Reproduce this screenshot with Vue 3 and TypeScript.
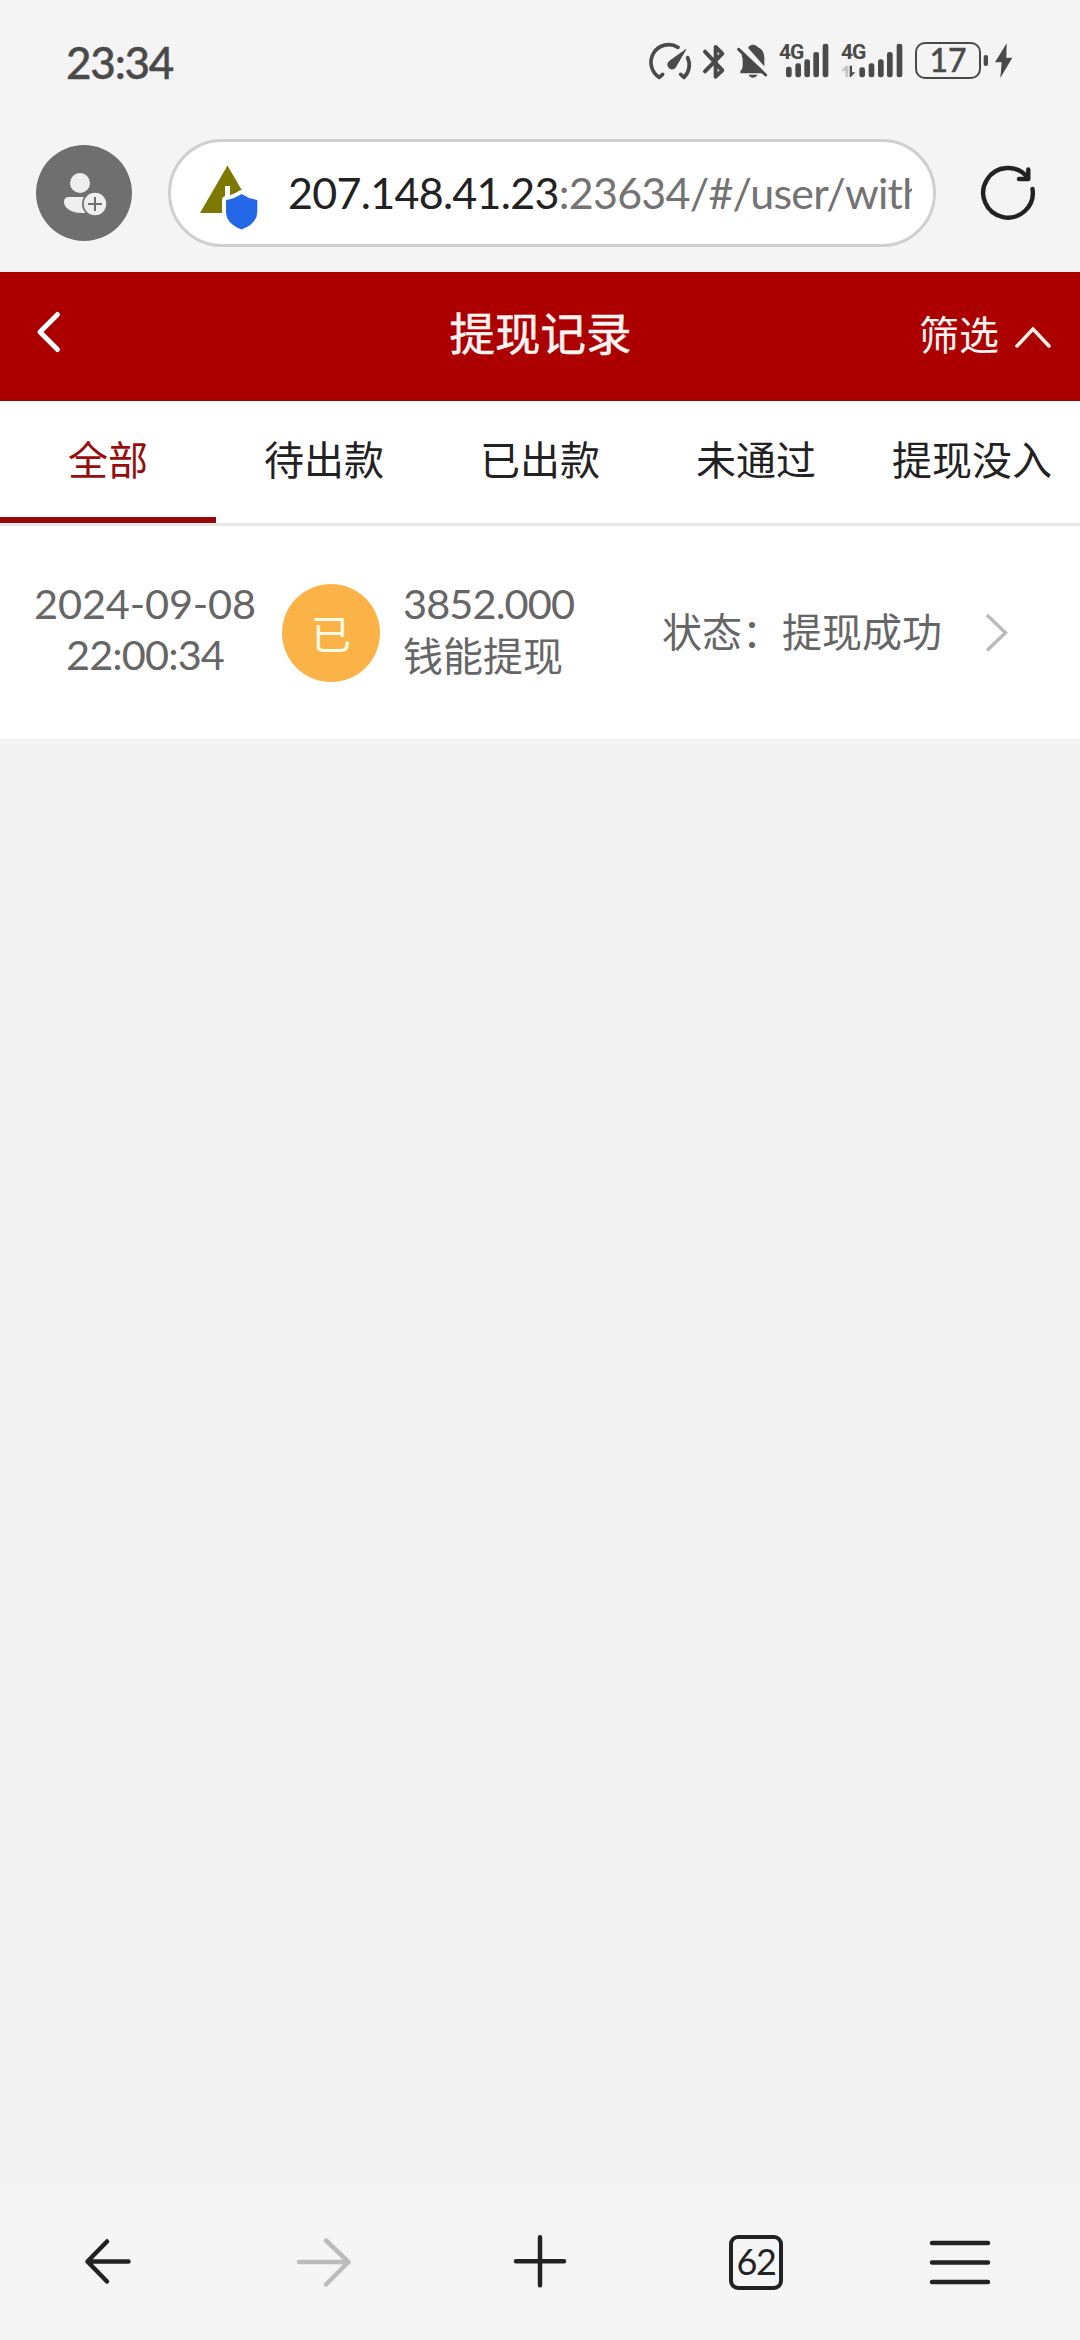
<script setup lang="ts">
import { ref } from 'vue'

interface WithdrawRecord {
  date: string
  time: string
  badge: string
  amount: string
  method: string
  status: string
}

const tabs: string[] = ['全部', '待出款', '已出款', '未通过', '提现没入']
const activeTab = ref(0)

const records: WithdrawRecord[] = [
  {
    date: '2024-09-08',
    time: '22:00:34',
    badge: '已',
    amount: '3852.000',
    method: '钱能提现',
    status: '提现成功',
  },
]
</script>

<template>
  <div class="screen">
    <div class="status-bar">
      <span class="clock">23:34</span>
      <div class="status-icons">
        <svg width="130" height="40" viewBox="0 0 390 120" class="glyphs">
          <!-- speed gauge -->
          <g fill="none" stroke="#4a4a4a" stroke-width="11" stroke-linecap="round" stroke-linejoin="round">
            <path d="M68 118 L58 127 A52 52 0 0 1 114 37" />
            <path d="M143 68 A52 52 0 0 1 132 127 L122 118" />
          </g>
          <path d="M137 44 L109 92 A13 13 0 1 1 88 79 Z" fill="#4a4a4a" stroke="#4a4a4a" stroke-width="3" stroke-linejoin="round" />
          <!-- bluetooth -->
          <path d="M195 50 L247 106 L227 125 V36 L247 56 L195 109" fill="none" stroke="#4a4a4a" stroke-width="12" stroke-linecap="round" stroke-linejoin="round" />
          <!-- muted bell -->
          <path d="M324 38 Q330 28 340 29 Q349 29 354 37 Q375 47 373 72 V94 Z" fill="#4a4a4a" />
          <path d="M306 56 L370 116 H301 V109 Q308 103 308 94 V72 Q304 63 306 56 Z M326 120 H353 Q348 129 339 129 Q330 129 326 120 Z" fill="#4a4a4a" transform="translate(0 -1)" />
          <path d="M296 43 L377 120" stroke="#4a4a4a" stroke-width="9" stroke-linecap="round" />
        </svg>
        <div class="signal first">
          <span class="net">4G</span>
          <svg width="52" height="40" viewBox="0 0 156 120">
            <g fill="#4a4a4a">
              <rect x="24" y="95" width="17" height="32" rx="7" />
              <rect x="52" y="85" width="17" height="42" rx="7" />
              <rect x="79" y="73" width="17" height="54" rx="7" />
              <rect x="106" y="51" width="17" height="76" rx="7" />
              <rect x="134" y="26" width="17" height="101" rx="7" />
            </g>
          </svg>
        </div>
        <div class="signal second">
          <span class="net">4G</span>
          <svg width="66" height="40" viewBox="0 0 198 120">
            <g fill="#4a4a4a">
              <rect x="58" y="97" width="17" height="30" rx="7" />
              <rect x="86" y="85" width="17" height="42" rx="7" />
              <rect x="114" y="73" width="17" height="54" rx="7" />
              <rect x="141" y="51" width="17" height="76" rx="7" />
              <rect x="170" y="26" width="17" height="101" rx="7" />
              <path d="M29 92 H36 V112 H46 L32 127 H29 Z" />
            </g>
            <path d="M2 108 L18 92 H25 V126 H16 V108 Z" fill="#c6c6c6" />
          </svg>
        </div>
        <div class="battery">17</div>
        <svg width="32" height="40" viewBox="0 0 96 120" class="bolt">
          <rect x="8" y="60" width="13" height="33" rx="6" fill="#4a4a4a" />
          <path d="M77 25 L42 82 H62 L58 129 L94 68 H76 Z" fill="#4a4a4a" />
        </svg>
      </div>
    </div>

    <div class="address-row">
      <div class="avatar">
        <svg width="96" height="96" viewBox="36 145 96 96">
          <circle cx="80" cy="183" r="10" fill="#eeeeee" />
          <path d="M69 197 H90 V213 H82 C71 213 64 208 64 202 Q64 197 69 197 Z" fill="#eeeeee" />
          <circle cx="95" cy="204" r="13" fill="#6f6f6f" />
          <circle cx="95" cy="204" r="11.2" fill="#eeeeee" />
          <path d="M88 204 H102 M95 197 V211" stroke="#6f6f6f" stroke-width="2" />
        </svg>
      </div>
      <div class="url-box">
        <svg class="site-icon" width="64" height="70" viewBox="197 162 64 70">
          <path d="M227.5 165.5 L255 213 H200 Z" fill="#7d7800" />
          <rect x="225" y="186" width="5" height="10" fill="#ffffff" />
          <path d="M241.5 194 Q249 199 257.300 200 V212 Q257 224 241.500 229.500 Q226.500 224 226 212 V200 Q234 199 241.500 194 Z" fill="#2468e8" stroke="#ffffff" stroke-width="8" stroke-linejoin="round" paint-order="stroke" />
        </svg>
        <div class="url"><span class="host">207.148.41.23</span><span class="path">:23634/#/user/with</span></div>
      </div>
      <svg class="reload" width="60" height="60" viewBox="978 163 60 60" fill="none" stroke="#222222" stroke-width="4.400" stroke-linecap="round" stroke-linejoin="round">
        <path d="M1032.500 189 A24.800 24.800 0 1 1 1027.500 177.500" />
        <path d="M1028.300 169.500 V179 H1019" />
      </svg>
    </div>

    <header class="page-header">
      <svg class="back" width="30" height="46" viewBox="34 308 30 46" fill="none" stroke="#ffffff" stroke-width="5" stroke-linecap="round" stroke-linejoin="round">
        <path d="M57.500 313.500 L40 331 L57.500 348.500" />
      </svg>
      <h1>提现记录</h1>
      <div class="filter">
        <span>筛选</span>
        <svg width="40" height="28" viewBox="1013 324 40 28" fill="none" stroke="#fff0ee" stroke-width="3.500" stroke-linecap="round">
          <path d="M1017 347 L1033 330 L1049 347" />
        </svg>
      </div>
    </header>

    <nav class="tabs">
      <div
        v-for="(tab, i) in tabs"
        :key="tab"
        class="tab"
        :class="{ active: i === activeTab }"
        @click="activeTab = i"
      >
        {{ tab }}
      </div>
    </nav>

    <main class="list">
      <div v-for="r in records" :key="r.date + r.time" class="record">
        <div class="when">
          <div class="num date">{{ r.date }}</div>
          <div class="num">{{ r.time }}</div>
        </div>
        <div class="badge">{{ r.badge }}</div>
        <div class="what">
          <div class="num">{{ r.amount }}</div>
          <div>{{ r.method }}</div>
        </div>
        <div class="state">状态：{{ r.status }}</div>
        <svg width="26" height="42" viewBox="984 612 26 42" fill="none" stroke="#bbbbbb" stroke-width="3.500">
          <path d="M987 615 L1005.500 632.700 L987 650.500" />
        </svg>
      </div>
    </main>

    <footer class="toolbar">
      <div class="tool">
        <svg width="60" height="60" viewBox="79 2232 60 60" stroke="#222222">
          <path d="M129.500 2261.500 H88.500 M108 2241.500 L88.500 2261.500 L108 2281.500" />
        </svg>
      </div>
      <div class="tool">
        <svg width="60" height="60" viewBox="294 2232 60 60" stroke="#bcbcbc">
          <path d="M299 2262 H348.500 M326 2240.500 L348.500 2262 L326 2284.500" />
        </svg>
      </div>
      <div class="tool">
        <svg width="60" height="60" viewBox="509.500 2232 60 60" stroke="#222222">
          <path d="M515.500 2261.300 H563.500 M539.500 2237.300 V2285.300" />
        </svg>
      </div>
      <div class="tool"><div class="tab-count">62</div></div>
      <div class="tool menu">
        <svg width="64" height="60" viewBox="928 2232 64 60" stroke="#222222">
          <path d="M932 2243 H988 M932 2262.500 H988 M932 2282 H988" />
        </svg>
      </div>
    </footer>
  </div>
</template>

<style>
html,
body {
  margin: 0;
  background: #f4f4f4;
}
</style>

<style scoped>
.screen {
  width: 1080px;
  height: 2340px;
  display: flex;
  flex-direction: column;
  overflow: hidden;
  background: #f3f3f3;
  font-family: "Noto Sans CJK SC", sans-serif;
}
svg {
  display: block;
  flex: none;
}
.status-bar {
  height: 124px;
  box-sizing: border-box;
  padding-left: 66px;
  display: flex;
  align-items: center;
  background: #f4f4f4;
  color: #4a4a4a;
}
.clock {
  width: 584px;
  font: 500 44px/60px Lato, sans-serif;
  letter-spacing: -1.2px;
  -webkit-text-stroke: 0.4px #4a4a4a;
}
.status-icons {
  display: flex;
  align-items: center;
  height: 48px;
}
.glyphs,
.signal svg,
.bolt {
  overflow: visible;
}
.glyphs,
.signal,
.bolt {
  margin-top: -14px;
}
.glyphs {
  margin-left: -10px;
}
.signal {
  position: relative;
}
.signal.first {
  margin-left: 8px;
}
.signal.second {
  margin-left: 10px;
}
.net {
  position: absolute;
  left: 1px;
  top: 5px;
  font: 700 21px/24px Roboto, sans-serif;
  letter-spacing: -1px;
}
.battery {
  width: 66px;
  height: 37px;
  margin-left: 9px;
  margin-top: -3px;
  box-sizing: border-box;
  border: 2.500px solid #4a4a4a;
  border-radius: 10px;
  text-align: center;
  font: 500 32px/32px Lato, sans-serif;
  -webkit-text-stroke: 0.4px #4a4a4a;
}
.address-row {
  height: 148px;
  box-sizing: border-box;
  padding: 15px 42px 0 36px;
  display: flex;
  align-items: flex-start;
  background: #f4f4f4;
}
.avatar {
  width: 96px;
  height: 96px;
  margin-top: 6px;
  border-radius: 50%;
  background: #6f6f6f;
}
.url-box {
  width: 768px;
  height: 108px;
  margin-left: 36px;
  box-sizing: border-box;
  padding: 0 21px 0 26px;
  display: flex;
  align-items: center;
  border: 3px solid #cfcfcf;
  border-radius: 54px;
  background: #ffffff;
}
.site-icon {
  margin-top: 8px;
}
.url {
  width: 626px;
  margin-left: 27px;
  overflow: hidden;
  white-space: nowrap;
  font: 400 43px/56px Lato, sans-serif;
}
.host {
  color: #222222;
  letter-spacing: -0.7px;
}
.path {
  color: #737373;
  letter-spacing: -0.75px;
}
.reload {
  margin: 24px 0 0 42px;
}
.page-header {
  height: 129px;
  box-sizing: border-box;
  padding: 0 27px 0 34px;
  display: grid;
  grid-template-columns: 1fr auto 1fr;
  align-items: center;
  background: #ac0000;
  color: #fff4f2;
}
.back {
  margin-top: -10px;
}
h1 {
  margin: -12px 6px 0 0;
  font-size: 45.500px;
  font-weight: 400;
  line-height: 60px;
  -webkit-text-stroke: 0.5px #fff4f2;
}
.filter {
  display: flex;
  align-items: center;
  justify-content: flex-end;
  gap: 14px;
  font-size: 40px;
  line-height: 60px;
}
.filter span {
  margin-top: -8px;
}
.tabs {
  height: 125px;
  box-sizing: border-box;
  display: flex;
  border-bottom: 3px solid #e8e8e8;
  background: #ffffff;
  color: #222222;
}
.tab {
  width: 216px;
  box-sizing: border-box;
  text-align: center;
  font-size: 40px;
  line-height: 115px;
  white-space: nowrap;
  border-bottom: 6px solid transparent;
}
.tab.active {
  color: #980c0c;
  border-bottom-color: #940a0a;
}
.record {
  height: 213px;
  box-sizing: border-box;
  padding-left: 24px;
  display: flex;
  align-items: center;
  background: #ffffff;
  color: #666666;
  font-size: 40px;
  line-height: 51px;
}
.when {
  width: 242px;
  margin-top: -8px;
  text-align: center;
}
.badge {
  width: 98px;
  height: 98px;
  margin-left: 16px;
  border-radius: 50%;
  background: #fbb347;
  color: #fffbe6;
  text-align: center;
  line-height: 97px;
}
.what {
  width: 259px;
  margin-top: -8px;
  margin-left: 23px;
}
.num {
  font-family: Lato, "Noto Sans CJK SC", sans-serif;
  font-size: 41.500px;
  letter-spacing: -0.9px;
}
.date {
  letter-spacing: -0.15px;
}
.state {
  width: 322px;
  margin-top: -5px;
}
.toolbar {
  height: 153px;
  margin-top: auto;
  box-sizing: border-box;
  padding-bottom: 3px;
  display: flex;
  align-items: center;
  background: #f5f5f5;
}
.tool {
  width: 216px;
  display: flex;
  justify-content: center;
}
.tool svg {
  fill: none;
  stroke-width: 4.500px;
  stroke-linecap: round;
  stroke-linejoin: round;
}
.tool.menu svg {
  margin-right: 24px;
}
.tab-count {
  width: 54px;
  height: 55px;
  box-sizing: border-box;
  border: 4.500px solid #222222;
  border-radius: 9px;
  text-align: center;
  color: #222222;
  font: 400 36px/45px Lato, sans-serif;
  letter-spacing: -1.500px;
}
</style>
